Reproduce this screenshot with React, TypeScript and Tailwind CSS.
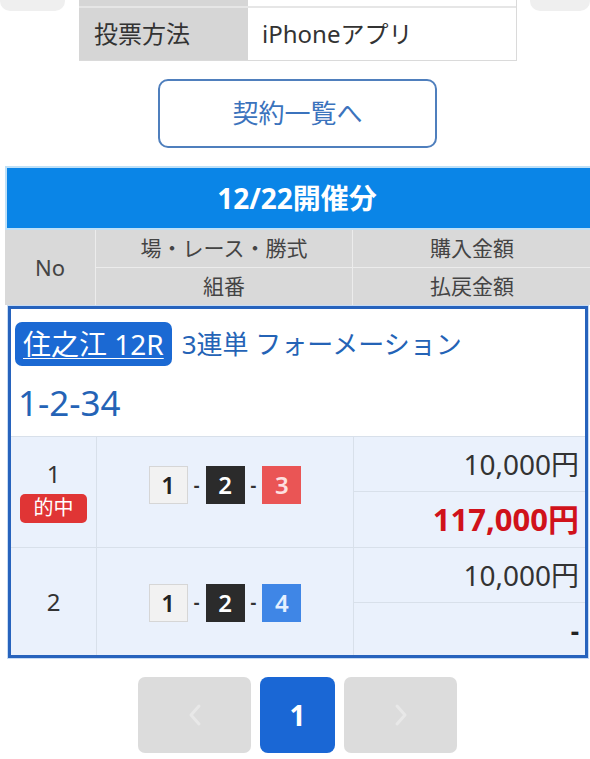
import React from "react";

function NumBox({ n, color }: { n: string; color: "white" | "black" | "red" | "blue" }) {
  const cls =
    color === "white"
      ? "bg-[#f2f2f2] text-[#222] border border-[#d6d6d6]"
      : color === "black"
      ? "bg-[#2b2b2b] text-white"
      : color === "red"
      ? "bg-[#ea5555] text-[#fde0e0]"
      : "bg-[#3f86e6] text-[#e6f0ff]";
  return (
    <div className={`w-[39px] h-[38px] flex items-center justify-center text-[24px] font-semibold leading-none ${cls}`}>
      {n}
    </div>
  );
}

function Combo({ last, color }: { last: string; color: "red" | "blue" }) {
  return (
    <div className="flex items-center gap-[6px]">
      <NumBox n="1" color="white" />
      <span className="text-[18px] text-[#333] font-bold">-</span>
      <NumBox n="2" color="black" />
      <span className="text-[18px] text-[#333] font-bold">-</span>
      <NumBox n={last} color={color} />
    </div>
  );
}

export default function App() {
  return (
    <div className="w-[590px] h-[759px] overflow-hidden bg-white text-[#333] font-['Noto_Sans','Noto_Sans_CJK_JP',sans-serif]">
      {/* top fragment */}
      <div className="flex items-start">
        <div className="w-[65px] h-[11px] bg-[#efefef] rounded-b-[10px]" />
        <div className="ml-[14px] w-[438px] border-r border-b border-[#dadada]">
          <div className="flex h-[8px] border-b-2 border-[#e6e6e6]">
            <div className="w-[169px] bg-[#d6d6d6]" />
            <div className="flex-1" />
          </div>
          <div className="flex h-[52px]">
            <div className="w-[169px] bg-[#d6d6d6] flex items-center pl-[15px] text-[24px] text-[#333]">投票方法</div>
            <div className="flex-1 flex items-center pl-[14px] text-[24px] text-[#333]">iPhoneアプリ</div>
          </div>
        </div>
        <div className="ml-[13px] w-[60px] h-[11px] bg-[#efefef] rounded-b-[10px]" />
      </div>

      {/* button */}
      <div className="mt-[18px] ml-[158px] w-[279px] h-[69px] border-2 border-[#4f7fbd] rounded-[10px] flex items-center justify-center text-[26px] text-[#3b73bd]">
        契約一覧へ
      </div>

      {/* blue header */}
      <div className="mt-[18px] ml-[5px] w-[590px] h-[64px] bg-[#0a85e7] border-y-2 border-l-2 border-[#bfe0f7] flex items-center justify-center">
        <span className="text-[28px] font-bold text-white mr-[8px]">12/22開催分</span>
      </div>

      {/* grey header */}
      <div className="ml-[5px] w-[590px] h-[75px] bg-[#d9d9d9] flex text-[#444]">
        <div className="w-[91px] flex items-center justify-center text-[22px] border-r border-[#ececec]">No</div>
        <div className="w-[257px] flex flex-col border-r border-[#ececec]">
          <div className="h-[38px] flex items-center justify-center text-[21px] border-b border-[#ececec]">場・レース・勝式</div>
          <div className="flex-1 flex items-center justify-center text-[21px]">組番</div>
        </div>
        <div className="flex-1 flex flex-col">
          <div className="h-[38px] flex items-center justify-center text-[21px] border-b border-[#ececec] pr-[4px]">購入金額</div>
          <div className="flex-1 flex items-center justify-center text-[21px] pr-[4px]">払戻金額</div>
        </div>
      </div>

      {/* blue box */}
      <div className="mt-[1px] ml-[8px] w-[580px] h-[352px] border-[3px] border-[#2763bd] outline outline-1 outline-[#c7dcf5]">
        <div className="h-[127px] bg-white pt-[13px] pl-[4px]">
          <div className="flex items-center">
            <span className="bg-[#1b69d3] rounded-[7px] h-[44px] px-[8px] flex items-center text-[28px] text-white underline underline-offset-[3px] decoration-1">
              住之江 12R
            </span>
            <span className="ml-[10px] text-[26px] text-[#2463b6]">3連単 フォーメーション</span>
          </div>
          <div className="mt-[19px] pl-[3px] text-[35px] text-[#2463b6] leading-none">1-2-34</div>
        </div>

        {/* row 1 */}
        <div className="flex h-[111px] bg-[#eaf1fc] border-t border-[#d8e0ea]">
          <div className="w-[86px] flex flex-col items-center justify-center border-r border-[#d8e0ea]">
            <span className="text-[24px] text-[#333] leading-none">1</span>
            <span className="mt-[8px] w-[67px] h-[29px] bg-[#e03535] rounded-[5px] flex items-center justify-center text-[20px] text-white">的中</span>
          </div>
          <div className="w-[257px] flex items-center justify-center border-r border-[#d8e0ea] pb-[14px]">
            <Combo last="3" color="red" />
          </div>
          <div className="flex-1 flex flex-col">
            <div className="h-[55px] flex items-center justify-end pr-[6px] text-[28px] text-[#333] border-b border-[#d8e0ea]">10,000円</div>
            <div className="flex-1 flex items-center justify-end pr-[6px] text-[31px] font-bold text-[#d0121b]">117,000円</div>
          </div>
        </div>

        {/* row 2 */}
        <div className="flex h-[108px] bg-[#eaf1fc] border-t border-[#d8e0ea]">
          <div className="w-[86px] flex items-center justify-center border-r border-[#d8e0ea] text-[24px] text-[#333]">2</div>
          <div className="w-[257px] flex items-center justify-center border-r border-[#d8e0ea] pt-[2px]">
            <Combo last="4" color="blue" />
          </div>
          <div className="flex-1 flex flex-col">
            <div className="h-[55px] flex items-center justify-end pr-[6px] text-[28px] text-[#333] border-b border-[#d8e0ea]">10,000円</div>
            <div className="flex-1 flex items-center justify-end pr-[6px] pt-[4px] text-[26px] font-bold text-[#222]">-</div>
          </div>
        </div>
      </div>

      {/* pagination */}
      <div className="mt-[19px] ml-[138px] flex gap-[9px]">
        <div className="w-[113px] h-[76px] bg-[#dcdcdc] rounded-[7px] flex items-center justify-center">
          <svg width="14" height="24" viewBox="0 0 14 24" fill="none">
            <path d="M11 3 L3 12 L11 21" stroke="#e8e8e8" strokeWidth="3" strokeLinecap="round" strokeLinejoin="round" />
          </svg>
        </div>
        <div className="w-[75px] h-[76px] bg-[#1a67d5] rounded-[8px] flex items-center justify-center text-[28px] font-bold text-white">1</div>
        <div className="w-[113px] h-[76px] bg-[#dcdcdc] rounded-[7px] flex items-center justify-center">
          <svg width="14" height="24" viewBox="0 0 14 24" fill="none">
            <path d="M3 3 L11 12 L3 21" stroke="#e8e8e8" strokeWidth="3" strokeLinecap="round" strokeLinejoin="round" />
          </svg>
        </div>
      </div>
    </div>
  );
}
